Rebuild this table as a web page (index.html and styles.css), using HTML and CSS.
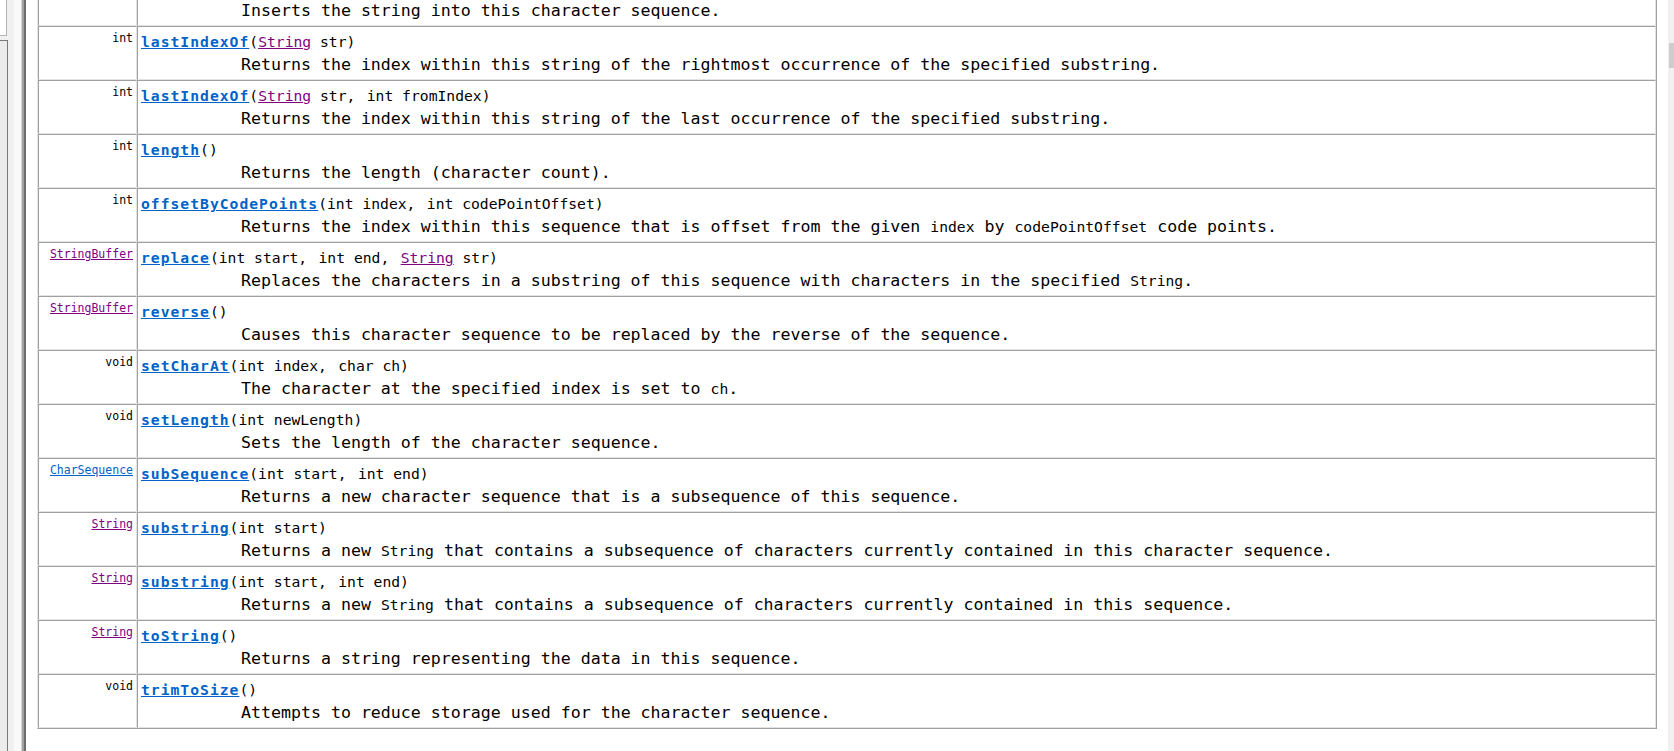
FILE: index.html
```html
<!DOCTYPE html>
<html>
<head>
<meta charset="utf-8">
<title>StringBuffer - Method Summary</title>
<link rel="stylesheet" href="styles.css">
</head>
<body>
<div class="window">
  <div class="leftframe">
    <div class="lf-a">
      <div class="lf-box1"></div>
      <div class="lf-gap"></div>
      <div class="lf-box2"></div>
    </div>
    <div class="lf-b"></div>
    <div class="lf-c"></div>
    <div class="lf-d"></div>
    <div class="lf-e"></div>
    <div class="lf-f"></div>
  </div>
  <div class="main">
    <table class="summary">
      <tr>
        <td class="type"></td>
        <td><div class="sig"></div>
        <div class="desc">Inserts the string into this character sequence.</div></td>
      </tr>
      <tr>
        <td class="type">int</td>
        <td><div class="sig"><a class="name" href="#">lastIndexOf</a>(<a class="v" href="#">String</a>&nbsp;str)</div>
        <div class="desc">Returns the index within this string of the rightmost occurrence of the specified substring.</div></td>
      </tr>
      <tr>
        <td class="type">int</td>
        <td><div class="sig"><a class="name" href="#">lastIndexOf</a>(<a class="v" href="#">String</a>&nbsp;str<span class="cm">,</span> int&nbsp;fromIndex)</div>
        <div class="desc">Returns the index within this string of the last occurrence of the specified substring.</div></td>
      </tr>
      <tr>
        <td class="type">int</td>
        <td><div class="sig"><a class="name" href="#">length</a>()</div>
        <div class="desc">Returns the length (character count).</div></td>
      </tr>
      <tr>
        <td class="type">int</td>
        <td><div class="sig"><a class="name" href="#">offsetByCodePoints</a>(int&nbsp;index<span class="cm">,</span> int&nbsp;codePointOffset)</div>
        <div class="desc">Returns the index within this sequence that is offset from the given <code>index</code> by <code>codePointOffset</code> code points.</div></td>
      </tr>
      <tr>
        <td class="type"><a class="v" href="#">StringBuffer</a></td>
        <td><div class="sig"><a class="name" href="#">replace</a>(int&nbsp;start<span class="cm">,</span> int&nbsp;end<span class="cm">,</span> <a class="v" href="#">String</a>&nbsp;str)</div>
        <div class="desc">Replaces the characters in a substring of this sequence with characters in the specified <code>String</code>.</div></td>
      </tr>
      <tr>
        <td class="type"><a class="v" href="#">StringBuffer</a></td>
        <td><div class="sig"><a class="name" href="#">reverse</a>()</div>
        <div class="desc">Causes this character sequence to be replaced by the reverse of the sequence.</div></td>
      </tr>
      <tr>
        <td class="type">void</td>
        <td><div class="sig"><a class="name" href="#">setCharAt</a>(int&nbsp;index<span class="cm">,</span> char&nbsp;ch)</div>
        <div class="desc">The character at the specified index is set to <code>ch</code>.</div></td>
      </tr>
      <tr>
        <td class="type">void</td>
        <td><div class="sig"><a class="name" href="#">setLength</a>(int&nbsp;newLength)</div>
        <div class="desc">Sets the length of the character sequence.</div></td>
      </tr>
      <tr>
        <td class="type"><a href="#">CharSequence</a></td>
        <td><div class="sig"><a class="name" href="#">subSequence</a>(int&nbsp;start<span class="cm">,</span> int&nbsp;end)</div>
        <div class="desc">Returns a new character sequence that is a subsequence of this sequence.</div></td>
      </tr>
      <tr>
        <td class="type"><a class="v" href="#">String</a></td>
        <td><div class="sig"><a class="name" href="#">substring</a>(int&nbsp;start)</div>
        <div class="desc">Returns a new <code>String</code> that contains a subsequence of characters currently contained in this character sequence.</div></td>
      </tr>
      <tr>
        <td class="type"><a class="v" href="#">String</a></td>
        <td><div class="sig"><a class="name" href="#">substring</a>(int&nbsp;start<span class="cm">,</span> int&nbsp;end)</div>
        <div class="desc">Returns a new <code>String</code> that contains a subsequence of characters currently contained in this sequence.</div></td>
      </tr>
      <tr>
        <td class="type"><a class="v" href="#">String</a></td>
        <td><div class="sig"><a class="name" href="#">toString</a>()</div>
        <div class="desc">Returns a string representing the data in this sequence.</div></td>
      </tr>
      <tr>
        <td class="type">void</td>
        <td><div class="sig"><a class="name" href="#">trimToSize</a>()</div>
        <div class="desc">Attempts to reduce storage used for the character sequence.</div></td>
      </tr>
    </table>
  </div>
  <div class="scrollbar"><div class="thumb"></div></div>
</div>
</body>
</html>
```

FILE: styles.css
```css
html, body {
  margin: 0;
  padding: 0;
  background: #ffffff;
  overflow: hidden;
}

.window {
  display: flex;
  height: 751px;
  width: 1674px;
}

/* left frame sliver */
.leftframe {
  display: flex;
  flex: none;
  width: 26px;
  height: 100%;
}
.lf-a {
  width: 8px;
  display: flex;
  flex-direction: column;
  background: #f0f0f0;
}
.lf-box1 {
  width: 6px;
  height: 35px;
  background: #ffffff;
  border-right: 1px solid #b4b4b4;
  border-bottom: 1px solid #b4b4b4;
}
.lf-gap {
  height: 4px;
}
.lf-box2 {
  flex: 1;
  background: #ececec;
  border-top: 1px solid #7a7a7a;
  border-right: 1px solid #7a7a7a;
}
.lf-b { width: 6px; background: #f0f0f0; }
.lf-c { width: 7px; background: #f9f9f9; }
.lf-d { width: 1px; background: #d4d4d4; }
.lf-e { width: 2px; background: #a0a0a0; }
.lf-f { width: 2px; background: #6d6d6d; }

/* main document frame */
.main {
  flex: 1;
  min-width: 0;
  overflow: hidden;
  padding: 0 11px;
  background: #ffffff;
}

.scrollbar {
  flex: none;
  width: 6px;
  background: #f0f0f0;
}
.thumb {
  margin-top: 43px;
  margin-left: 1px;
  width: 5px;
  height: 25px;
  background: #cdcdcd;
}

/* summary table */
.summary {
  width: 100%;
  table-layout: fixed;
  border-collapse: separate;
  border-spacing: 0;
  border: 1px solid;
  border-color: #e3e3e3 #a0a0a0 #a0a0a0 #e3e3e3;
  margin-top: -29px;
  background: #ffffff;
}
.summary td {
  border: 1px solid;
  border-color: #a0a0a0 #e3e3e3 #e3e3e3 #a0a0a0;
  padding: 3px;
  vertical-align: top;
  color: #000000;
}
.summary td.type {
  width: 91px;
  text-align: right;
  font-family: "DejaVu Sans Mono", monospace;
  font-size: 11.5px;
  line-height: 16px;
  white-space: nowrap;
}

.sig {
  font-family: "DejaVu Sans Mono", monospace;
  font-size: 14.7px;
  line-height: 23px;
  height: 23px;
  white-space: nowrap;
}
.cm {
  padding-right: 2.5px;
}
.name {
  font-weight: bold;
  letter-spacing: 1px;
}

.desc {
  font-family: "DejaVu Sans Mono", monospace;
  font-size: 16.6px;
  line-height: 23px;
  height: 23px;
  padding-left: 100px;
  white-space: nowrap;
}
.desc code {
  font-family: "DejaVu Sans Mono", monospace;
  font-size: 14.7px;
  line-height: 16px;
}

a {
  color: #0063c8;
  text-decoration: underline;
}
a.v {
  color: #800080;
}
```
